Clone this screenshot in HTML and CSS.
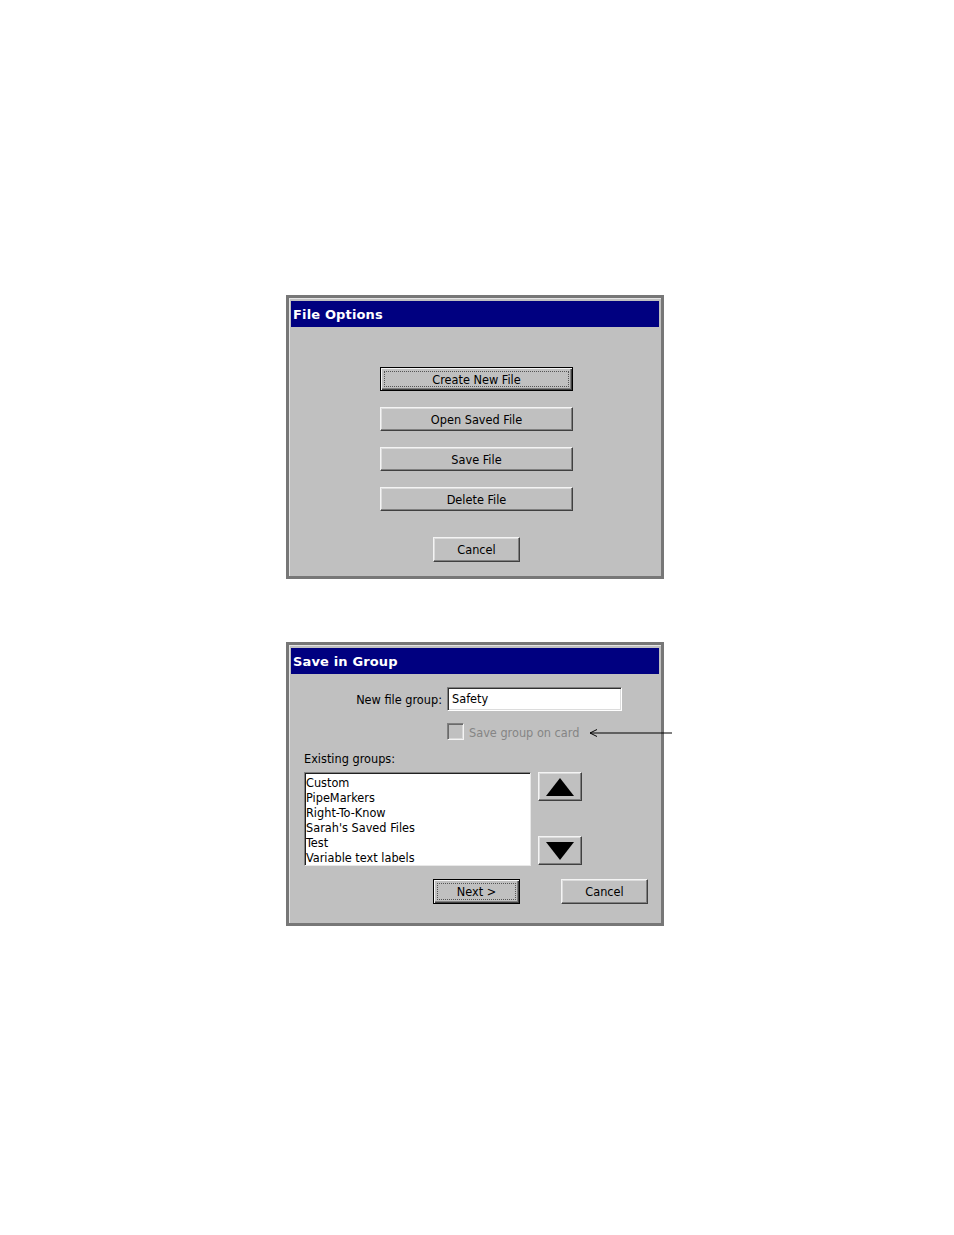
FILE: index.html
```html
<!DOCTYPE html>
<html>
<head>
<meta charset="utf-8">
<title>File Options</title>
<link rel="stylesheet" href="styles.css">
</head>
<body>
<div class="page">
  <div class="dialog dialog-file">
    <div class="titlebar">File Options</div>
    <div class="body body-file">
      <div class="btn wide focused"><span class="focus">Create New File</span></div>
      <div class="btn wide">Open Saved File</div>
      <div class="btn wide">Save File</div>
      <div class="btn wide">Delete File</div>
      <div class="btn small cancel1">Cancel</div>
    </div>
  </div>

  <div class="dialog dialog-group">
    <div class="titlebar">Save in Group</div>
    <div class="body body-group">
      <div class="row-input">
        <span class="label">New file group:</span>
        <div class="textbox">Safety</div>
      </div>
      <div class="row-check">
        <span class="checkbox"></span>
        <span class="disabled">Save group on card</span>
      </div>
      <div class="existing">Existing groups:</div>
      <div class="row-list">
        <div class="listbox">
          <div class="item">Custom</div>
          <div class="item">PipeMarkers</div>
          <div class="item">Right-To-Know</div>
          <div class="item">Sarah's Saved Files</div>
          <div class="item">Test</div>
          <div class="item">Variable text labels</div>
        </div>
        <div class="scrollcol">
          <div class="arrowbtn">
            <svg width="30" height="20" viewBox="0 0 30 20"><polygon points="15,1 29,19 1,19" fill="#000"/></svg>
          </div>
          <div class="arrowbtn">
            <svg width="30" height="20" viewBox="0 0 30 20"><polygon points="1,1 29,1 15,19" fill="#000"/></svg>
          </div>
        </div>
      </div>
      <div class="row-buttons">
        <div class="btn small focused"><span class="focus">Next &gt;</span></div>
        <div class="btn small">Cancel</div>
      </div>
    </div>
    <svg class="pointer" width="83" height="12" viewBox="0 0 83 12">
      <line x1="1" y1="6" x2="83" y2="6" stroke="#000" stroke-width="1"/>
      <polyline points="8,2.5 1,6 8,9.5" fill="none" stroke="#000" stroke-width="1"/>
    </svg>
  </div>
</div>
</body>
</html>
```

FILE: styles.css
```css
html, body {
  margin: 0;
  padding: 0;
  background: #ffffff;
}

.page {
  padding: 295px 0 0 286px;
  display: flex;
  flex-direction: column;
  gap: 63px;
  font-family: "DejaVu Sans Condensed", "DejaVu Sans", "Liberation Sans", sans-serif;
  font-stretch: condensed;
  font-size: 12.6px;
  color: #000;
}

.dialog {
  position: relative;
  box-sizing: border-box;
  width: 378px;
  height: 284px;
  background: #c0c0c0;
  border: 3px solid #777777;
  padding: 3px 2px 2px 2px;
  box-shadow: inset 1px 1px 0 #e4e4e4;
  display: flex;
  flex-direction: column;
}

.titlebar {
  box-sizing: border-box;
  height: 26px;
  padding-top: 3px;
  line-height: 22px;
  background: #000080;
  color: #ffffff;
  font-family: "DejaVu Sans", Verdana, sans-serif;
  font-stretch: normal;
  font-weight: bold;
  font-size: 13px;
  letter-spacing: 0.15px;
  padding-left: 2px;
}

.body {
  flex: 1;
  display: flex;
  flex-direction: column;
}

.btn {
  box-sizing: border-box;
  height: 24px;
  display: flex;
  align-items: center;
  justify-content: center;
  background: #c0c0c0;
  border: 1px solid;
  border-color: #f4f4f4 #404040 #404040 #f4f4f4;
  box-shadow: inset -1px -1px 0 #808080, inset 1px 1px 0 #dcdcdc;
  color: #000;
  line-height: 14px;
  padding-top: 1px;
}

.btn.focused {
  border: 1px solid #000;
  box-shadow: inset 1px 1px 0 #f4f4f4, inset -1px -1px 0 #404040, inset -2px -2px 0 #808080;
  padding: 3px;
}

.btn .focus {
  flex: 1;
  align-self: stretch;
  display: flex;
  align-items: center;
  justify-content: center;
  border: 1px dotted #555;
  padding-top: 1px;
}

.wide {
  width: 193px;
  margin-left: 89px;
}

.body-file .wide {
  margin-top: 16px;
}

.body-file .wide:first-child {
  margin-top: 40px;
}

.small {
  width: 87px;
  height: 25px;
}

.cancel1 {
  margin-left: 142px;
  margin-top: 26px;
}

/* Save in Group */
.body-group {
  padding-left: 13px;
}

.row-input {
  margin-top: 13px;
  display: flex;
  align-items: center;
  gap: 5px;
}

.label {
  width: 138px;
  text-align: right;
}

.textbox {
  box-sizing: border-box;
  width: 175px;
  height: 24px;
  background: #ffffff;
  border: 1px solid;
  border-color: #808080 #ffffff #ffffff #808080;
  box-shadow: inset 1px 1px 0 #303030, inset -1px -1px 0 #dcdcdc;
  padding-left: 4px;
  line-height: 22px;
}

.row-check {
  margin-top: 12px;
  margin-left: 143px;
  display: flex;
  align-items: center;
  gap: 5px;
  height: 17px;
}

.checkbox {
  box-sizing: border-box;
  width: 17px;
  height: 17px;
  border: 1px solid;
  border-color: #808080 #f4f4f4 #f4f4f4 #808080;
  box-shadow: inset 1px 1px 0 #6a6a6a, inset -1px -1px 0 #d8d8d8;
  background: #c0c0c0;
}

.disabled {
  color: #858585;
  padding-top: 1px;
}

.existing {
  margin-top: 11px;
  line-height: 15px;
  height: 15px;
}

.row-list {
  margin-top: 6px;
  display: flex;
  gap: 7px;
}

.listbox {
  box-sizing: border-box;
  width: 227px;
  height: 94px;
  background: #ffffff;
  border: 1px solid;
  border-color: #808080 #e8e8e8 #e8e8e8 #808080;
  box-shadow: inset 1px 1px 0 #202020;
  padding: 2px 0 0 1px;
  overflow: hidden;
}

.item {
  line-height: 15px;
  height: 15px;
  white-space: nowrap;
}

.scrollcol {
  height: 93px;
  display: flex;
  flex-direction: column;
  justify-content: space-between;
}

.arrowbtn {
  box-sizing: border-box;
  width: 44px;
  height: 29px;
  display: flex;
  align-items: center;
  justify-content: center;
  border: 1px solid;
  border-color: #f4f4f4 #404040 #404040 #f4f4f4;
  box-shadow: inset -1px -1px 0 #808080, inset 1px 1px 0 #dcdcdc;
}

.arrowbtn svg {
  display: block;
}

.row-buttons {
  margin-top: 13px;
  margin-left: 129px;
  display: flex;
  gap: 41px;
}

.pointer {
  position: absolute;
  left: 300px;
  top: 82px;
  overflow: visible;
}
```
